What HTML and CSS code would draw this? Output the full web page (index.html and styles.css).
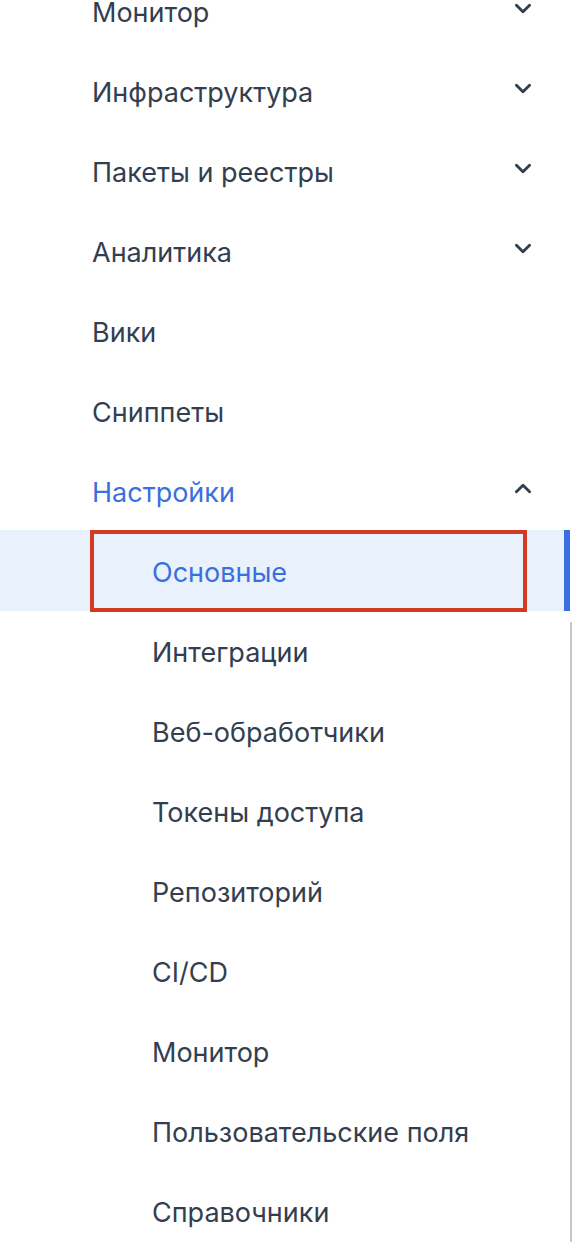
FILE: index.html
```html
<!DOCTYPE html>
<html lang="ru">
<head>
<meta charset="utf-8">
<title>Настройки</title>
<link rel="stylesheet" href="styles.css">
</head>
<body>
<nav class="sidebar">
  <ul class="menu">
    <li class="item"><span class="label">Монитор</span><svg class="chev" viewBox="0 0 16 10"><path d="M2 2l6 6 6-6"/></svg></li>
    <li class="item"><span class="label">Инфраструктура</span><svg class="chev" viewBox="0 0 16 10"><path d="M2 2l6 6 6-6"/></svg></li>
    <li class="item"><span class="label">Пакеты и реестры</span><svg class="chev" viewBox="0 0 16 10"><path d="M2 2l6 6 6-6"/></svg></li>
    <li class="item"><span class="label">Аналитика</span><svg class="chev" viewBox="0 0 16 10"><path d="M2 2l6 6 6-6"/></svg></li>
    <li class="item"><span class="label">Вики</span></li>
    <li class="item"><span class="label">Сниппеты</span></li>
    <li class="item item-open"><span class="label">Настройки</span><svg class="chev chev-up" viewBox="0 0 16 10"><path d="M2 8l6-6 6 6"/></svg></li>
    <li class="sub sub-active"><span class="label">Основные</span><span class="focus-box"></span></li>
    <li class="sub"><span class="label">Интеграции</span></li>
    <li class="sub"><span class="label">Веб-обработчики</span></li>
    <li class="sub"><span class="label">Токены доступа</span></li>
    <li class="sub"><span class="label">Репозиторий</span></li>
    <li class="sub"><span class="label">CI/CD</span></li>
    <li class="sub"><span class="label">Монитор</span></li>
    <li class="sub"><span class="label">Пользовательские поля</span></li>
    <li class="sub"><span class="label">Справочники</span></li>
  </ul>
  <div class="scroll-track"></div>
</nav>
</body>
</html>
```
FILE: styles.css
```css
html {
  overflow: hidden;
}

html, body {
  margin: 0;
  padding: 0;
  background: #ffffff;
}

body {
  font-family: Inter, "Noto Sans", "Liberation Sans", sans-serif;
  color: #333e50;
}

.sidebar {
  position: relative;
  display: flow-root;
  width: 572px;
  height: 1242px;
}

.menu {
  list-style: none;
  margin: -28px 0 0 0;
  padding: 0;
  width: 570px;
}

.item, .sub {
  position: relative;
  display: flex;
  align-items: center;
  justify-content: space-between;
  height: 80px;
  font-size: 27px;
  line-height: 1;
  padding: 0 38px 0 92px;
  box-sizing: border-box;
}

.sub {
  padding-left: 152px;
}

.label {
  white-space: nowrap;
}

.chev {
  width: 18px;
  height: 11px;
  fill: none;
  stroke: #333e50;
  stroke-width: 2.6;
  stroke-linecap: round;
  stroke-linejoin: round;
  margin-top: -8px;
}

.item-open .label {
  color: #3a6fe0;
}

.sub-active {
  background: #e9f1fc;
  border-right: 6px solid #3b6fe1;
  margin-top: -2px;
  height: 81px;
  padding-top: 3px;
}

.sub-active .label {
  color: #3a6fe0;
}

.sub-active + .sub {
  margin-top: 1px;
}

.focus-box {
  position: absolute;
  left: 90px;
  top: 0;
  width: 437px;
  height: 82px;
  border: 4px solid #d23a21;
  box-sizing: border-box;
}

.scroll-track {
  position: absolute;
  right: 0;
  top: 622px;
  width: 2px;
  bottom: 0;
  background: #c8c8c8;
}
```
